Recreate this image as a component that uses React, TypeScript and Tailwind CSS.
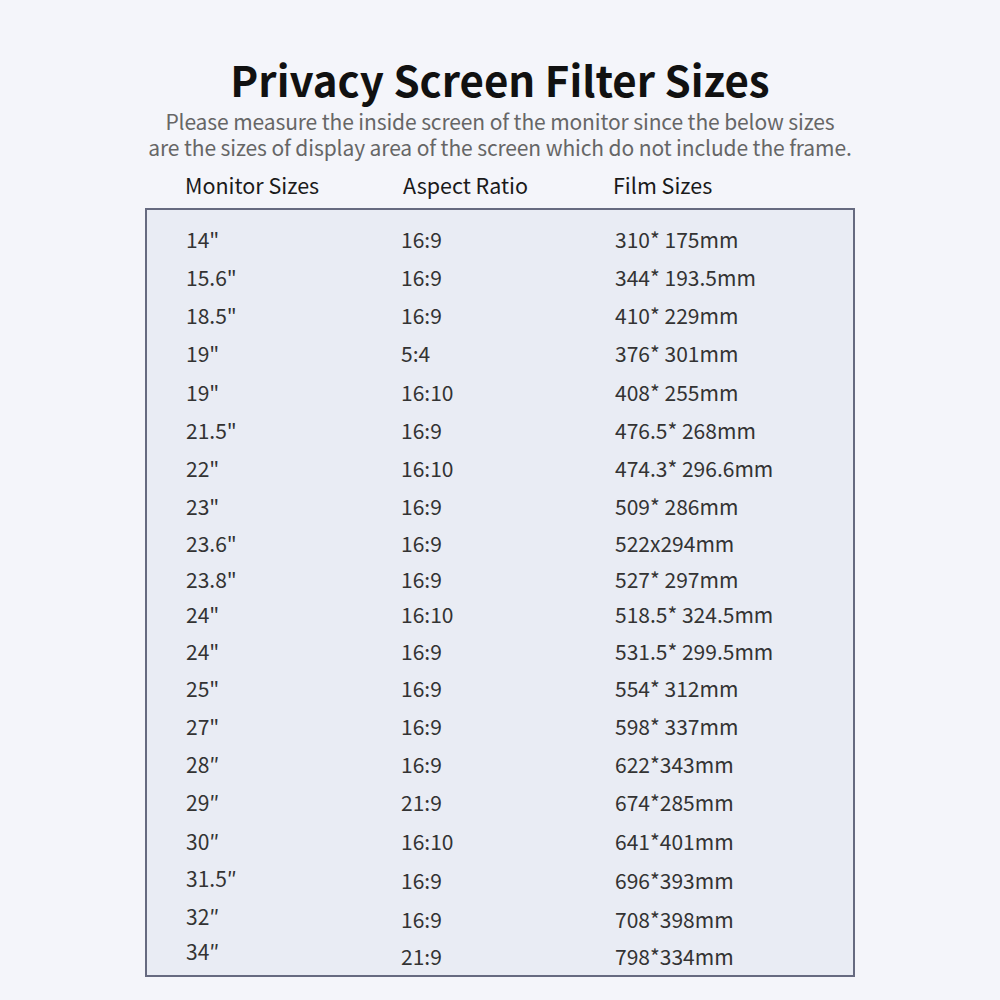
const rows = [
  { size: '14"', ratio: "16:9", film: "310* 175mm", h: "h-[38px]", lift: "" },
  { size: '15.6"', ratio: "16:9", film: "344* 193.5mm", h: "h-[38px]", lift: "" },
  { size: '18.5"', ratio: "16:9", film: "410* 229mm", h: "h-[38px]", lift: "" },
  { size: '19"', ratio: "5:4", film: "376* 301mm", h: "h-[38px]", lift: "" },
  { size: '19"', ratio: "16:10", film: "408* 255mm", h: "h-[39px]", lift: "" },
  { size: '21.5"', ratio: "16:9", film: "476.5* 268mm", h: "h-[38px]", lift: "" },
  { size: '22"', ratio: "16:10", film: "474.3* 296.6mm", h: "h-[38px]", lift: "" },
  { size: '23"', ratio: "16:9", film: "509* 286mm", h: "h-[38px]", lift: "" },
  { size: '23.6"', ratio: "16:9", film: "522x294mm", h: "h-[36px]", lift: "" },
  { size: '23.8"', ratio: "16:9", film: "527* 297mm", h: "h-[35px]", lift: "" },
  { size: '24"', ratio: "16:10", film: "518.5* 324.5mm", h: "h-[36px]", lift: "" },
  { size: '24"', ratio: "16:9", film: "531.5* 299.5mm", h: "h-[37px]", lift: "" },
  { size: '25"', ratio: "16:9", film: "554* 312mm", h: "h-[38px]", lift: "" },
  { size: '27"', ratio: "16:9", film: "598* 337mm", h: "h-[37px]", lift: "" },
  { size: "28″", ratio: "16:9", film: "622*343mm", h: "h-[39px]", lift: "" },
  { size: "29″", ratio: "21:9", film: "674*285mm", h: "h-[38px]", lift: "" },
  { size: "30″", ratio: "16:10", film: "641*401mm", h: "h-[40px]", lift: "" },
  { size: "31.5″", ratio: "16:9", film: "696*393mm", h: "h-[38px]", lift: "-mt-[4px]" },
  { size: "32″", ratio: "16:9", film: "708*398mm", h: "h-[39px]", lift: "-mt-[6px]" },
  { size: "34″", ratio: "21:9", film: "798*334mm", h: "h-[36px]", lift: "-mt-[10px]" },
];

const font = { fontFamily: '"Noto Sans CJK SC", "Noto Sans", sans-serif' };

export default function App() {
  return (
    <div className="flex h-[1000px] w-[1000px] flex-col items-center bg-[#f4f5fa]" style={font}>
      <h1 className="mt-[55px] text-[42px] font-bold leading-[48px] text-[#111111]">
        Privacy Screen Filter Sizes
      </h1>
      <p className="mt-[5px] text-center text-[21px] leading-[26px] tracking-[-0.005em] text-[#666666]">
        Please measure the inside screen of the monitor since the below sizes
        <br />
        are the sizes of display area of the screen which do not include the frame.
      </p>

      <div className="mt-[12px] grid w-[710px] grid-cols-[258px_210px_1fr] text-[21.5px] leading-[26px] text-[#1a1a1a]">
        <span className="pl-[40px]">Monitor Sizes</span>
        <span>Aspect Ratio</span>
        <span>Film Sizes</span>
      </div>

      <div className="mt-[10px] w-[710px] border-2 border-[#666a80] bg-[#e9ecf4] pt-[11px] pl-[39px] text-[21px] text-[#333333]">
        {rows.map((r, i) => (
          <div key={i} className={`grid grid-cols-[215px_214px_1fr] items-center ${r.h}`}>
            <span className={r.lift}>{r.size}</span>
            <span>{r.ratio}</span>
            <span>{r.film}</span>
          </div>
        ))}
      </div>
    </div>
  );
}
